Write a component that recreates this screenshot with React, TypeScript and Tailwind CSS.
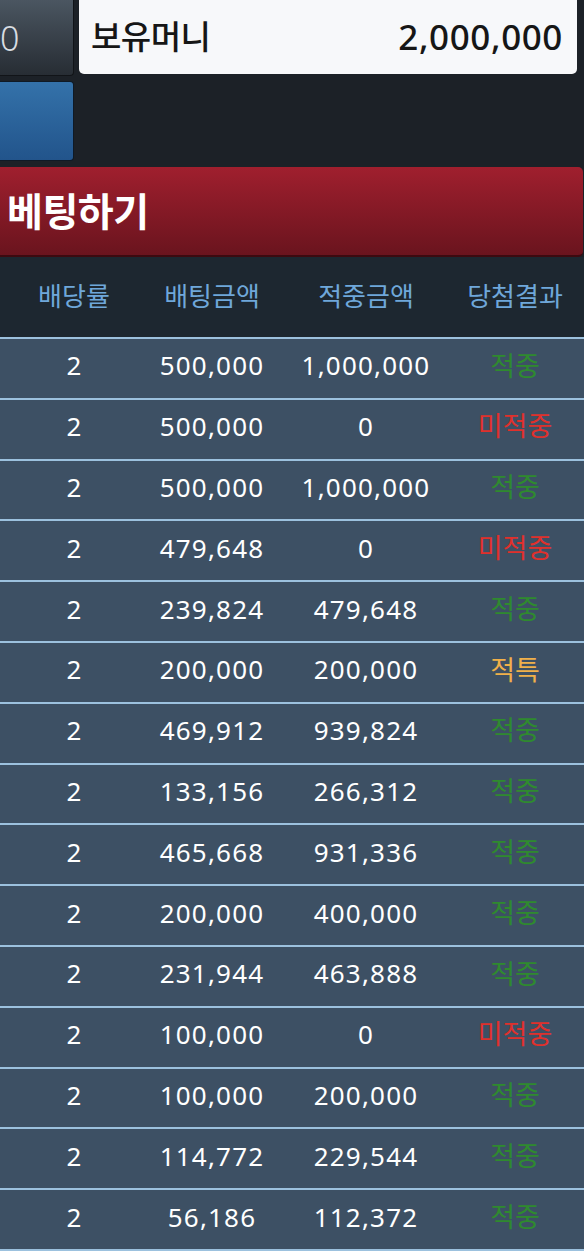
import React from 'react';

type Bet = {
  odds: string;
  amount: string;
  win: string;
  result: '적중' | '미적중' | '적특';
};

const bets: Bet[] = [
  { odds: '2', amount: '500,000', win: '1,000,000', result: '적중' },
  { odds: '2', amount: '500,000', win: '0', result: '미적중' },
  { odds: '2', amount: '500,000', win: '1,000,000', result: '적중' },
  { odds: '2', amount: '479,648', win: '0', result: '미적중' },
  { odds: '2', amount: '239,824', win: '479,648', result: '적중' },
  { odds: '2', amount: '200,000', win: '200,000', result: '적특' },
  { odds: '2', amount: '469,912', win: '939,824', result: '적중' },
  { odds: '2', amount: '133,156', win: '266,312', result: '적중' },
  { odds: '2', amount: '465,668', win: '931,336', result: '적중' },
  { odds: '2', amount: '200,000', win: '400,000', result: '적중' },
  { odds: '2', amount: '231,944', win: '463,888', result: '적중' },
  { odds: '2', amount: '100,000', win: '0', result: '미적중' },
  { odds: '2', amount: '100,000', win: '200,000', result: '적중' },
  { odds: '2', amount: '114,772', win: '229,544', result: '적중' },
  { odds: '2', amount: '56,186', win: '112,372', result: '적중' },
];

const resultColor: Record<Bet['result'], string> = {
  적중: 'text-[#2f8a2f]',
  미적중: 'text-[#e0302c]',
  적특: 'text-[#f0b04a]',
};

export default function App() {
  return (
    <div className="min-h-[1251px] w-[584px] overflow-hidden bg-[#1c2127] font-['Noto_Sans','Noto_Sans_CJK_KR',sans-serif]">
      {/* top: money + buttons */}
      <div className="flex gap-[5px]">
        <div className="flex flex-col gap-[5px]">
          <div className="flex h-[76px] w-[74px] items-center overflow-hidden rounded-br-[4px] border border-l-0 border-t-0 border-[#111418] bg-gradient-to-b from-[#4b5661] to-[#272d34] text-[34px] font-light text-[#d8dde2]">
            <span className="leading-none">0</span>
          </div>
          <div className="h-[80px] w-[74px] rounded-r-[4px] border border-l-0 border-[#0f1a26] bg-gradient-to-b from-[#3472aa] to-[#22548b]" />
        </div>
        <div className="flex h-[74px] w-[498px] items-center justify-between rounded-b-[5px] bg-[#f7f8fa] pl-[12px] pr-[14px] text-[#161616]">
          <span className="text-[33px] font-medium tracking-[-0.5px]">보유머니</span>
          <span className="text-[35px] font-medium tracking-[0.6px]">2,000,000</span>
        </div>
      </div>

      {/* bet button */}
      <div className="mt-[6px] flex h-[90px] w-[583px] items-center rounded-r-[5px] border-b-2 border-[#3c0a10] bg-gradient-to-b from-[#a01f2e] to-[#6a141e] pl-[7px]">
        <span className="text-[39px] font-bold tracking-[-0.5px] text-white">베팅하기</span>
      </div>

      {/* table header */}
      <div className="grid h-[80px] grid-cols-[148px_128px_180px_118px] items-center bg-[#1d2730] pb-[2px] text-[26px] text-[#6fa7da]">
        <div className="text-center">배당률</div>
        <div className="text-center">배팅금액</div>
        <div className="text-center">적중금액</div>
        <div className="text-center">당첨결과</div>
      </div>

      {/* rows */}
      <div className="flex flex-col border-b-2 border-[#9cc1de]">
        {bets.map((b, i) => (
          <div
            key={i}
            className="grid h-[60.8px] grid-cols-[148px_128px_180px_118px] items-center border-t-2 border-[#9cc1de] bg-[#3d5064] pb-[5px] text-[26px] text-white"
          >
            <div className="text-center">{b.odds}</div>
            <div className="text-center tracking-[1.2px]">{b.amount}</div>
            <div className="text-center tracking-[1.2px]">{b.win}</div>
            <div className={`text-center text-[27px] ${resultColor[b.result]}`}>{b.result}</div>
          </div>
        ))}
      </div>
    </div>
  );
}
